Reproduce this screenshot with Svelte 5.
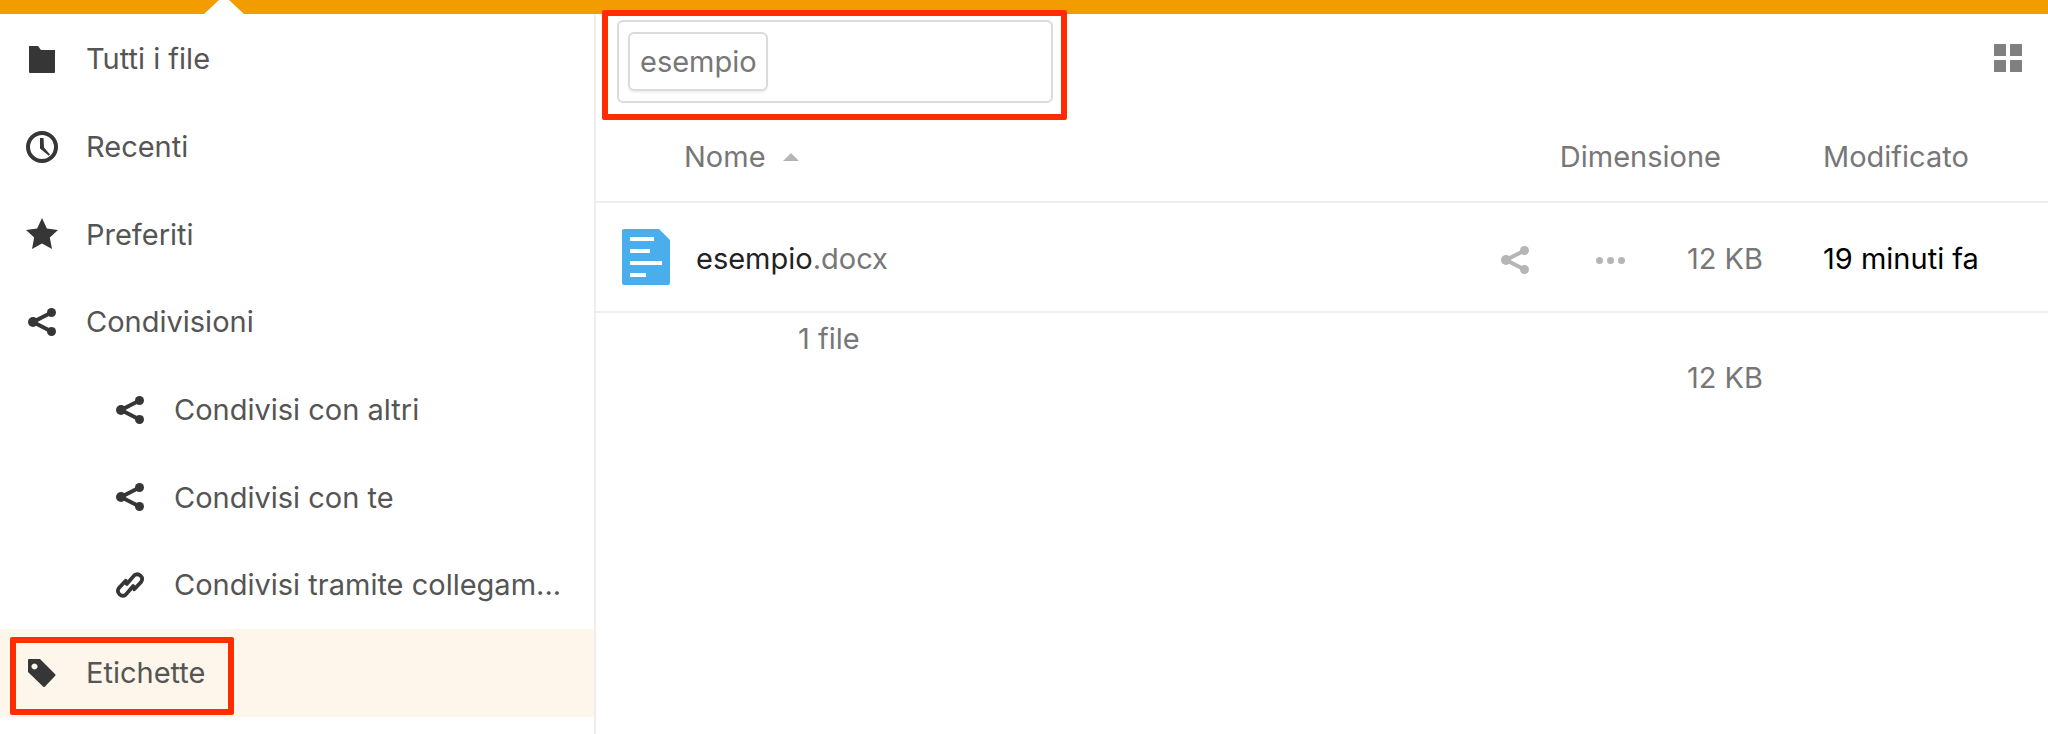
<script>
  const icons = {
    folder: 'M1 1h9l3 4h14v22q0 1-1 1H2q-1 0-1-1z',
    star: 'M16 0l4.9 10.6 11.1 1.3-8.2 7.7 2.2 11.4L16 25.4 6 31l2.2-11.4L0 11.9l11.1-1.3z',
    tag: 'M1 0h11l15 15q1 1 0 2L17 27.500q-1 1-2 0L0 13V1q0-1 1-1zM6.500 4.500a3 3 0 1 0 .01 0z',
  };
  const top = [
    { name: 'Tutti i file', icon: 'folder' },
    { name: 'Recenti', icon: 'clock' },
    { name: 'Preferiti', icon: 'star' },
    { name: 'Condivisioni', icon: 'share' },
  ];
  const sub = [
    { name: 'Condivisi con altri', icon: 'share' },
    { name: 'Condivisi con te', icon: 'share' },
    { name: 'Condivisi tramite collegam...', icon: 'link' },
  ];
</script>

{#snippet shareIcon(cls)}
  <svg class={cls} viewBox="0 0 28 28" aria-hidden="true">
    <path class="line" d="M23.500 4.500L5 14l18.500 9.500" />
    <circle cx="23.500" cy="4.500" r="4.500" />
    <circle cx="5" cy="14" r="5" />
    <circle cx="23.500" cy="23.500" r="4.500" />
  </svg>
{/snippet}

{#snippet icon(kind)}
  <span class="icon-box">
    {#if kind === 'share'}
      {@render shareIcon('ico')}
    {:else if kind === 'folder'}
      <svg class="ico" viewBox="0 0 28 28" aria-hidden="true"><path d={icons.folder} /></svg>
    {:else if kind === 'clock'}
      <svg class="ico large" viewBox="0 0 32 32" aria-hidden="true">
        <circle class="ring" cx="16" cy="16" r="14" />
        <path d="M14 7h3.500l.5 9.500 6 7-1.200 1.200-8.800-7.200z" />
      </svg>
    {:else if kind === 'star'}
      <svg class="ico large" viewBox="0 0 32 32" aria-hidden="true"><path d={icons.star} /></svg>
    {:else if kind === 'link'}
      <svg class="ico link" viewBox="0 0 28 28" aria-hidden="true">
        <path class="chain" d="M11 13l7-8a4.500 4.500 0 0 1 6.500 6L18 18" />
        <path class="chain" d="M17 15l-7 8a4.500 4.500 0 0 1-6.500-6L10 10" />
      </svg>
    {:else if kind === 'tag'}
      <svg class="ico" viewBox="0 0 28 28" aria-hidden="true"><path fill-rule="evenodd" d={icons.tag} /></svg>
    {/if}
  </span>
{/snippet}

<div class="page">
  <header class="topbar"><span class="notch"></span></header>
  <div class="body">
    <aside class="side">
      <nav>
        {#each top as item}
          <div class="nav-row">{@render icon(item.icon)}<span class="label">{item.name}</span></div>
        {/each}
        {#each sub as item}
          <div class="nav-row nested">{@render icon(item.icon)}<span class="label">{item.name}</span></div>
        {/each}
        <div class="nav-row active">
          {@render icon('tag')}<span class="label">Etichette</span>
          <span class="mark mark-side"></span>
        </div>
      </nav>
    </aside>

    <main class="main">
      <div class="controls">
        <div class="search">
          <span class="chip">esempio</span>
        </div>
        <div class="grid-toggle"><i></i><i></i><i></i><i></i></div>
        <span class="mark mark-search"></span>
      </div>

      <div class="row head">
        <div class="c-name">Nome <span class="sort"></span></div>
        <div class="c-size">Dimensione</div>
        <div class="c-mod">Modificato</div>
      </div>

      <div class="row file">
        <div class="c-name">
          <svg class="doc" viewBox="0 0 48 56" aria-hidden="true">
            <path d="M2 0h35l11 11v43q0 2-2 2H2q-2 0-2-2V2q0-2 2-2z" />
            <rect x="8" y="8" width="24" height="4" />
            <rect x="8" y="20" width="20" height="4" />
            <rect x="8" y="32" width="32" height="4" />
            <rect x="8" y="44" width="16" height="4" />
          </svg>
          <span class="fname">esempio<span class="ext">.docx</span></span>
        </div>
        <div class="act act-share">{@render shareIcon('ico-small')}</div>
        <div class="act act-more"><b></b><b></b><b></b></div>
        <div class="c-size">12 KB</div>
        <div class="c-mod dark">19 minuti fa</div>
      </div>

      <div class="row summary">
        <div class="c-name">1 file</div>
        <div class="c-size">12 KB</div>
        <div class="c-mod"></div>
      </div>
    </main>
  </div>
</div>

<style>
  :global(body) {
    margin: 0;
    background: #fff;
  }
  .page {
    width: 2048px;
    height: 734px;
    overflow: hidden;
    display: flex;
    flex-direction: column;
    font-family: Inter, "Liberation Sans", sans-serif;
    font-size: 29px;
    color: #555;
  }
  .topbar {
    position: relative;
    height: 14px;
    flex: none;
    background: #f39c00;
  }
  .notch {
    position: absolute;
    left: 204px;
    top: 0;
    width: 40px;
    height: 14px;
    background: #fff;
    clip-path: polygon(0 100%, 15px 0, 25px 0, 100% 100%);
  }
  .body {
    flex: 1;
    display: flex;
    min-height: 0;
  }
  .side {
    width: 594px;
    flex: none;
    padding-top: 1px;
    border-right: 2px solid #eee;
  }
  .nav-row {
    position: relative;
    height: 87.7px;
    display: flex;
    align-items: center;
    padding-left: 26px;
  }
  .nav-row.nested {
    padding-left: 114px;
  }
  .nav-row.active {
    background: #fef6ea;
  }
  .icon-box {
    width: 32px;
    height: 32px;
    flex: none;
    margin-right: 28px;
    display: flex;
    align-items: center;
    justify-content: center;
  }
  .label {
    white-space: nowrap;
  }
  .ico {
    width: 28px;
    height: 28px;
    fill: #363636;
  }
  .ico.large {
    width: 32px;
    height: 32px;
  }
  .ico.link {
    width: 30px;
    height: 30px;
  }
  .ring {
    fill: none;
    stroke: #363636;
    stroke-width: 4;
  }
  .line {
    fill: none;
    stroke: currentColor;
    stroke-width: 4;
  }
  .ico .line {
    color: #363636;
  }
  .chain {
    fill: none;
    stroke: #363636;
    stroke-width: 3.500;
    stroke-linecap: round;
  }
  .mark {
    position: absolute;
    box-sizing: border-box;
    border: 6px solid #ff2d00;
    border-radius: 2px;
  }
  .mark-side {
    left: 10px;
    top: 8px;
    width: 224px;
    height: 78px;
  }
  .mark-search {
    left: 6px;
    top: -4px;
    width: 465px;
    height: 110px;
  }
  .main {
    flex: 1;
    min-width: 0;
  }
  .controls {
    position: relative;
    height: 106px;
    box-sizing: border-box;
    padding: 6px 26px 0 21px;
    display: flex;
    align-items: flex-start;
    justify-content: space-between;
  }
  .search {
    width: 436px;
    height: 83px;
    box-sizing: border-box;
    border: 2px solid #dbdbdb;
    border-radius: 6px;
    padding: 10px 9px;
  }
  .chip {
    display: inline-block;
    height: 59px;
    line-height: 55px;
    box-sizing: border-box;
    border: 2px solid #dbdbdb;
    border-radius: 6px;
    padding: 0 9px 0 10px;
    color: #777;
    box-shadow: 0 2px 2px #f0f0f0;
  }
  .grid-toggle {
    display: grid;
    grid-template-columns: 12px 12px;
    grid-auto-rows: 12px;
    gap: 4px;
    margin-top: 24px;
  }
  .grid-toggle i {
    background: #808080;
  }
  .row {
    display: flex;
    align-items: center;
  }
  .c-name {
    flex: 1;
    min-width: 0;
    display: flex;
    align-items: center;
  }
  .c-size {
    width: 129px;
    text-align: right;
    white-space: nowrap;
    color: #777;
    flex: none;
  }
  .c-mod {
    margin-left: 60px;
    width: 225px;
    flex: none;
    white-space: nowrap;
    color: #777;
  }
  .dark {
    color: #000;
  }
  .head {
    height: 83px;
    box-sizing: border-box;
    border-bottom: 2px solid #eee;
    color: #777;
    padding-bottom: 8px;
  }
  .head .c-name {
    padding-left: 88px;
  }
  .head .c-size {
    width: 220px;
    padding-right: 42px;
    box-sizing: border-box;
  }
  .sort {
    display: inline-block;
    width: 0;
    height: 0;
    margin-left: 17px;
    border: 8px solid transparent;
    border-top: 0;
    border-bottom-color: #b5b5b5;
  }
  .file {
    height: 110px;
    box-sizing: border-box;
    border-bottom: 2px solid #eee;
  }
  .file .c-name {
    padding-left: 26px;
  }
  .doc {
    width: 48px;
    height: 56px;
    flex: none;
    margin-right: 26px;
    fill: #4aaeed;
  }
  .doc rect {
    fill: #fff;
  }
  .fname {
    color: #222;
    padding-top: 3px;
  }
  .ext {
    color: #777;
  }
  .file .c-size,
  .file .c-mod {
    padding-top: 3px;
  }
  .act {
    width: 48px;
    flex: none;
    display: flex;
    justify-content: center;
    align-items: center;
    padding-top: 6px;
  }
  .act-more {
    margin-left: 47px;
    gap: 4px;
  }
  .act-more b {
    width: 7px;
    height: 7px;
    border-radius: 50%;
    background: #b5b5b5;
  }
  .ico-small {
    width: 28px;
    height: 28px;
    fill: #b5b5b5;
    color: #b5b5b5;
  }
  .summary {
    align-items: flex-start;
    padding-top: 8px;
  }
  .summary .c-name {
    padding-left: 202px;
    color: #777;
  }
  .summary .c-size {
    margin-top: 39px;
  }
</style>
